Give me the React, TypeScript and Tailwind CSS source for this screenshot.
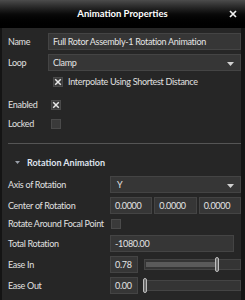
import React from "react";

const font = { fontFamily: 'Lato, "Open Sans", sans-serif' };

function Check({ checked }: { checked?: boolean }) {
  return (
    <div className="w-[10px] h-[10px] bg-[#3a3a3a] border border-[#4a4a4a] flex items-center justify-center shrink-0">
      {checked && (
        <svg width="8" height="8" viewBox="0 0 8 8">
          <path d="M1.2 1.2 L6.8 6.8 M6.8 1.2 L1.2 6.8" stroke="#e8e8e8" strokeWidth="1.5" />
        </svg>
      )}
    </div>
  );
}

function Caret() {
  return (
    <svg width="7" height="4" viewBox="0 0 7 4" className="absolute right-[6px] top-[7px]">
      <path d="M0 0 L7 0 L3.5 4 Z" fill="#d0d0d0" />
    </svg>
  );
}

const inputCls =
  "h-[17px] bg-[#363636] border border-[#444444] text-[#e4e4e4] text-[9px] leading-[15px] px-[4px] whitespace-nowrap overflow-hidden";

function Slider({ pct }: { pct: number }) {
  return (
    <div className="relative flex-1 h-[11px] bg-[#343434] border border-[#444]">
      {pct > 0 && (
        <div className="absolute left-[1px] top-[2px] h-[5px] bg-[#5a5a5a]" style={{ width: `${pct}%` }} />
      )}
      <div
        className="absolute top-[-3px] w-[4px] h-[15px] rounded-[2px] bg-[#6a6a6a] border border-[#bdbdbd]"
        style={{ left: `calc(${pct}% - 2px)` }}
      />
    </div>
  );
}

export default function App() {
  return (
    <div className="w-[245px] h-[300px] bg-[#141414] overflow-hidden" style={font}>
      <div className="h-[28px] relative flex items-center justify-center bg-gradient-to-b from-[#4c4c4c] via-[#0a0a0a] to-[#000]">
        <span className="text-white text-[9.5px] font-bold">Animation Properties</span>
        <svg width="8" height="8" viewBox="0 0 8 8" className="absolute right-[8px] top-[10px]">
          <path d="M1 1 L7 7 M7 1 L1 7" stroke="#f0f0f0" strokeWidth="1.7" />
        </svg>
      </div>
      <div className="ml-[2px] mr-[4px] h-[272px] bg-[#262626] text-[#e0e0e0] text-[9px] tracking-[-0.3px] flex flex-col pl-[6px] whitespace-nowrap">
        <div className="flex items-center mt-[5px] h-[17px]">
          <div className="w-[40px]">Name</div>
          <div className={inputCls + " flex-1"}>Full Rotor Assembly-1 Rotation Animation</div>
        </div>
        <div className="flex items-center mt-[4px] h-[17px]">
          <div className="w-[40px]">Loop</div>
          <div className={inputCls + " flex-1 relative"}>
            Clamp
            <Caret />
          </div>
        </div>
        <div className="flex items-center mt-[5px] ml-[45px] gap-[5px] h-[12px]">
          <Check checked />
          <span>Interpolate Using Shortest Distance</span>
        </div>
        <div className="flex items-center mt-[11px] h-[12px]">
          <div className="w-[43px]">Enabled</div>
          <Check checked />
        </div>
        <div className="flex items-center mt-[7px] h-[12px]">
          <div className="w-[43px]">Locked</div>
          <Check />
        </div>
        <div className="mt-[13px] h-px bg-[#555]" />
        <div className="flex items-center mt-[12px] h-[14px] text-[#dfe3ee] font-bold tracking-normal">
          <svg width="5" height="4" viewBox="0 0 5 4" className="ml-[7px] mr-[7px]">
            <path d="M0 0 L5 0 L2.5 3 Z" fill="#9aa0aa" />
          </svg>
          Rotation Animation
        </div>
        <div className="flex items-center mt-[6px] h-[17px]">
          <div className="w-[102px]">Axis of Rotation</div>
          <div className={inputCls + " flex-1 relative pl-[6px]"}>
            Y
            <Caret />
          </div>
        </div>
        <div className="flex items-center mt-[4px] h-[17px]">
          <div className="w-[102px]">Center of Rotation</div>
          <div className="flex-1 flex gap-[2px]">
            <div className={inputCls + " flex-1"}>0.0000</div>
            <div className={inputCls + " flex-1"}>0.0000</div>
            <div className={inputCls + " flex-1"}>0.0000</div>
          </div>
        </div>
        <div className="flex items-center mt-[4px] h-[12px]">
          <div className="w-[103px]">Rotate Around Focal Point</div>
          <Check />
        </div>
        <div className="flex items-center mt-[5px] h-[17px]">
          <div className="w-[102px]">Total Rotation</div>
          <div className={inputCls + " w-[124px]"}>-1080.00</div>
        </div>
        <div className="flex items-center mt-[4px] h-[17px]">
          <div className="w-[102px]">Ease In</div>
          <div className={inputCls + " w-[28px]"}>0.78</div>
          <div className="ml-[6px] flex-1 flex items-center">
            <Slider pct={76} />
          </div>
        </div>
        <div className="flex items-center mt-[4px] h-[17px]">
          <div className="w-[102px]">Ease Out</div>
          <div className={inputCls + " w-[28px]"}>0.00</div>
          <div className="ml-[6px] flex-1 flex items-center">
            <Slider pct={0} />
          </div>
        </div>
      </div>
    </div>
  );
}
